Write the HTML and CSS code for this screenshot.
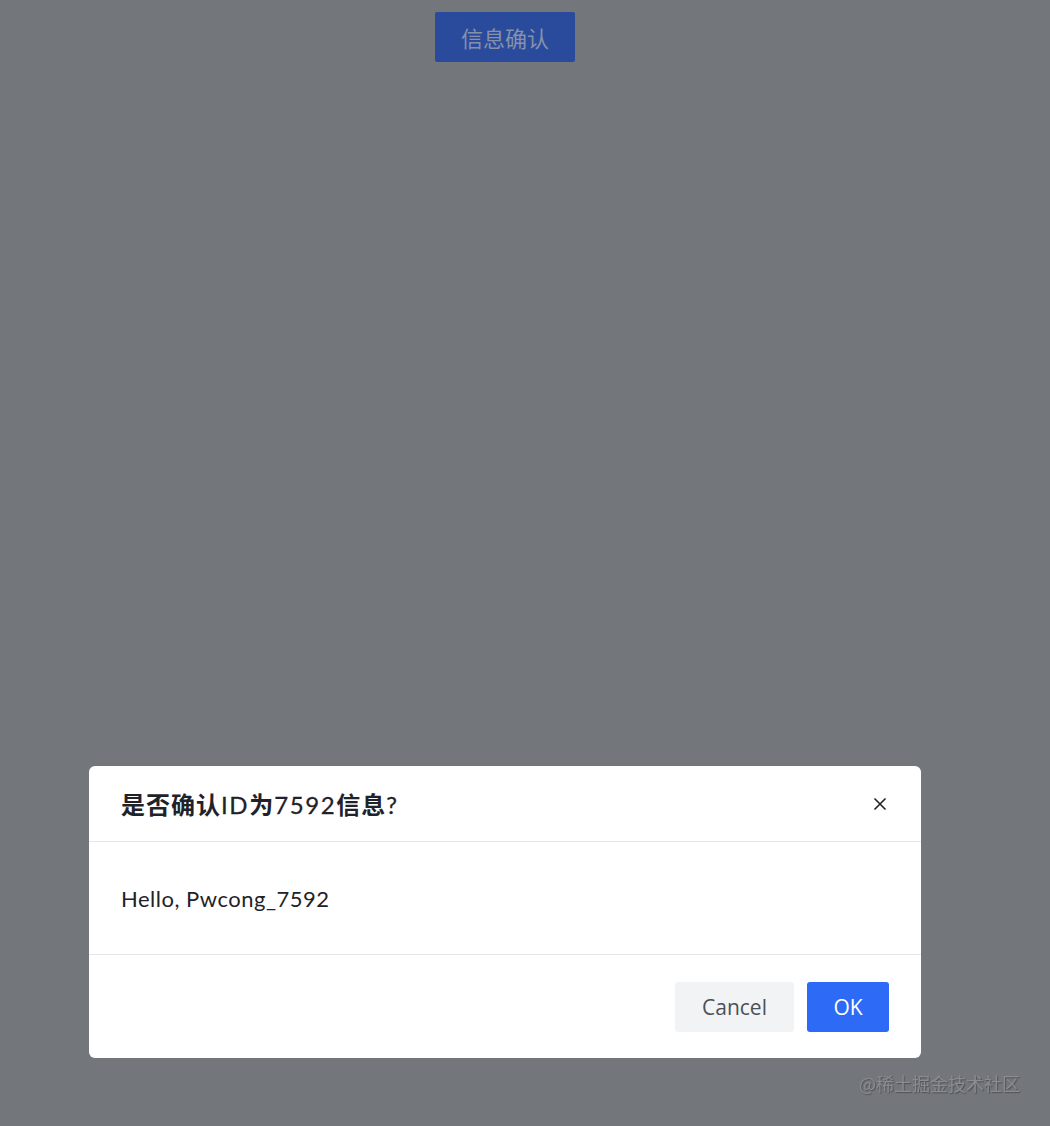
FILE: index.html
```html
<!DOCTYPE html>
<html lang="zh-CN">
<head>
<meta charset="UTF-8">
<meta name="viewport" content="width=device-width, initial-scale=1.0">
<title>信息确认</title>
<link rel="stylesheet" href="styles.css">
</head>
<body>
<div class="page">
<button class="btn-open">信息确认</button>
</div>
<div class="overlay">
<div class="modal">
<div class="modal-header">
<span class="modal-title">是否确认<span class="latin">ID</span>为<span class="latin">7592</span>信息<span class="latin">?</span></span>
<button class="modal-close" aria-label="close">
<svg width="14" height="14" viewBox="0 0 14 14"><path d="M1.5 1.5 L12.5 12.5 M12.5 1.5 L1.5 12.5" stroke="#1f2329" stroke-width="1.6" fill="none"/></svg>
</button>
</div>
<div class="modal-body">Hello, Pwcong_7592</div>
<div class="modal-footer">
<button class="btn btn-cancel">Cancel</button>
<button class="btn btn-ok">OK</button>
</div>
</div>
</div>
<div class="watermark">@稀土掘金技术社区</div>
</body>
</html>
```

FILE: styles.css
```css
body {
margin: 0;
font-family: 'Lato', 'Noto Sans CJK SC', sans-serif;
background-color: #73767b;
min-height: 100vh;
}
.page {
padding: 12px 0 0 435px;
}
.btn-open {
width: 140px;
height: 50px;
background-color: #2a4b9c;
color: #8591ab;
border: none;
border-radius: 2px;
font-family: 'Noto Sans CJK SC', sans-serif;
font-size: 22px;
}
.overlay {
position: fixed;
inset: 0;
display: flex;
align-items: flex-start;
padding: 766px 0 0 89px;
}
.modal {
width: 832px;
background-color: #fff;
border-radius: 6px;
}
.modal-header {
display: flex;
align-items: center;
justify-content: space-between;
height: 75px;
padding: 0 32px;
border-bottom: 1px solid #e4e6e9;
}
.modal-title {
font-size: 24px;
font-weight: bold;
letter-spacing: 1px;
color: #1f2329;
}
.modal-title .latin {
font-weight: normal;
letter-spacing: 1.6px;
-webkit-text-stroke: 0.3px #1f2329;
}
.modal-close {
background: none;
border: none;
padding: 0;
width: 18px;
height: 18px;
display: flex;
align-items: center;
justify-content: center;
}
.modal-body {
height: 112px;
padding: 0 32px;
display: flex;
align-items: center;
font-size: 22px;
letter-spacing: 0.5px;
color: #1f2329;
border-bottom: 1px solid #e4e6e9;
}
.modal-footer {
display: flex;
justify-content: flex-end;
gap: 13px;
padding: 27px 32px 26px;
}
.btn {
height: 50px;
border: none;
border-radius: 3px;
font-family: 'Open Sans', sans-serif;
font-size: 21px;
}
.btn-cancel {
width: 119px;
background-color: #f1f3f5;
color: #4b5057;
}
.btn-ok {
width: 82px;
background-color: #2d6bf6;
color: #fff;
}
.watermark {
position: fixed;
right: 30px;
bottom: 30px;
font-family: 'Noto Sans CJK SC', sans-serif;
font-size: 18px;
color: #8a8c90;
text-shadow: 1px 1px 1px #505256;
}
```
